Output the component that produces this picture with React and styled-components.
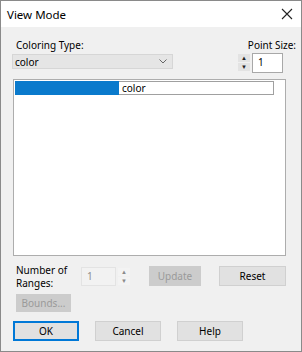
import React from 'react';
import styled, { createGlobalStyle } from 'styled-components';

const Global = createGlobalStyle`
  html, body { margin: 0; padding: 0; background: #f0f0f0; }
  body { font-family: "Noto Sans", "Open Sans", sans-serif; font-size: 10px; color: #000; }
`;

const Window = styled.div`
  width: 302px;
  height: 352px;
  box-sizing: border-box;
  border: 1px solid #8a8a8a;
  background: #f0f0f0;
  display: flex;
  flex-direction: column;
`;

const TitleBar = styled.div`
  height: 26px;
  background: #fff;
  display: flex;
  align-items: center;
  justify-content: space-between;
  padding: 0 8px 0 6px;
  font-size: 11.5px;
`;

const Body = styled.div`
  display: flex;
  flex-direction: column;
  padding: 11px 5px 0 11px;
`;

const Header = styled.div`
  display: flex;
  justify-content: space-between;
  align-items: flex-start;
`;

const Column = styled.div`
  display: flex;
  flex-direction: column;
  align-items: ${p => (p.$end ? 'flex-end' : 'flex-start')};
`;

const Label = styled.div`
  line-height: 14px;
  padding-left: ${p => p.$indent || 0}px;
`;

const Select = styled.div`
  margin-top: 2px;
  width: 161px;
  height: 15px;
  box-sizing: border-box;
  background: #e5e5e5;
  border: 1px solid #d6d6d6;
  display: flex;
  align-items: center;
  justify-content: space-between;
  padding: 0 5px 0 2px;
`;

const SpinRow = styled.div`
  margin-top: 1px;
  margin-right: 13px;
  display: flex;
  gap: 2px;
`;

const Spinner = styled.div`
  display: flex;
  flex-direction: column;
  justify-content: center;
  gap: 1px;
  height: ${p => p.$h}px;
`;

const SpinBtn = styled.div`
  width: 12px;
  height: 8px;
  background: ${p => (p.$disabled ? '#f3f3f3' : '#e3e3e3')};
  display: flex;
  align-items: center;
  justify-content: center;
  color: ${p => (p.$disabled ? '#8a8a8a' : '#222')};
  font-size: 6px;
  line-height: 1;
`;

const Field = styled.div`
  width: ${p => p.$w}px;
  height: ${p => p.$h}px;
  box-sizing: border-box;
  background: ${p => (p.$disabled ? '#f2f2f2' : '#fff')};
  border: 1px solid ${p => (p.$disabled ? '#e3e3e3' : '#a8a8a8')};
  color: ${p => (p.$disabled ? '#8d8d8d' : '#000')};
  padding: 2px 0 0 5px;
  line-height: 13px;
`;

const ListBox = styled.div`
  margin-top: 6px;
  margin-left: 1px;
  width: 273px;
  height: 177px;
  box-sizing: border-box;
  background: #fff;
  border: 1px solid #adadad;
  padding: 1px;
`;

const ListRow = styled.div`
  display: flex;
  height: 14px;
`;

const Swatch = styled.div`
  width: 104px;
  background: ${p => p.$color};
`;

const Cell = styled.div`
  width: 155px;
  box-sizing: border-box;
  border: 1px solid #a0a0a0;
  border-left: none;
  padding-left: 3px;
  line-height: 12px;
`;

const RangesRow = styled.div`
  margin-top: 10px;
  display: flex;
  align-items: center;
  height: 20px;
`;

const RangesLabel = styled.div`
  width: 65px;
  padding-left: 4px;
  line-height: 13px;
  margin-top: 1px;
`;

const NumberBox = styled.div`
  display: flex;
  gap: 2px;
  width: 68px;
`;

const Button = styled.button`
  width: ${p => p.$w}px;
  height: ${p => p.$h || 20}px;
  box-sizing: border-box;
  padding: 0;
  font-family: inherit;
  font-size: 10px;
  color: ${p => (p.$disabled ? '#9a9a9a' : '#000')};
  background: ${p => (p.$disabled ? '#cccccc' : '#e1e1e1')};
  border: ${p =>
    p.$primary ? '2px solid #0078d7' : p.$disabled ? '1px solid #cccccc' : '1px solid #d0d0d0'};
  margin-left: ${p => p.$ml || 0}px;
`;

const BoundsRow = styled.div`
  margin-top: 8px;
  padding-left: 4px;
  display: flex;
`;

const Footer = styled.div`
  margin-top: 9px;
  margin-left: 1px;
  display: flex;
  gap: 16px;
`;

const Close = () => (
  <svg width="12" height="12" viewBox="0 0 12 12">
    <path d="M1 1 L11 11 M11 1 L1 11" stroke="#222" strokeWidth="1.1" />
  </svg>
);

const Chevron = () => (
  <svg width="8" height="5" viewBox="0 0 8 5">
    <path d="M0.5 0.5 L4 4 L7.5 0.5" fill="none" stroke="#666" strokeWidth="1" />
  </svg>
);

export default function App() {
  return (
    <>
      <Global />
      <Window>
        <TitleBar>
          <span>View Mode</span>
          <Close />
        </TitleBar>
        <Body>
          <Header>
            <Column>
              <Label $indent={4}>Coloring Type:</Label>
              <Select>
                <span>color</span>
                <Chevron />
              </Select>
            </Column>
            <Column $end>
              <Label>Point Size:</Label>
              <SpinRow>
                <Spinner $h={19}>
                  <SpinBtn>▲</SpinBtn>
                  <SpinBtn>▼</SpinBtn>
                </Spinner>
                <Field $w={31} $h={20}>1</Field>
              </SpinRow>
            </Column>
          </Header>
          <ListBox>
            <ListRow>
              <Swatch $color="#0a7acc" />
              <Cell>color</Cell>
            </ListRow>
          </ListBox>
          <RangesRow>
            <RangesLabel>
              Number of
              <br />
              Ranges:
            </RangesLabel>
            <NumberBox>
              <Field $w={35} $h={19} $disabled>1</Field>
              <Spinner $h={19}>
                <SpinBtn $disabled>▲</SpinBtn>
                <SpinBtn $disabled>▼</SpinBtn>
              </Spinner>
            </NumberBox>
            <Button $w={52} $disabled>Update</Button>
            <Button $w={67} $ml={18}>Reset</Button>
          </RangesRow>
          <BoundsRow>
            <Button $w={55} $h={18} $disabled>Bounds...</Button>
          </BoundsRow>
          <Footer>
            <Button $w={66} $primary>OK</Button>
            <Button $w={66}>Cancel</Button>
            <Button $w={66}>Help</Button>
          </Footer>
        </Body>
      </Window>
    </>
  );
}
